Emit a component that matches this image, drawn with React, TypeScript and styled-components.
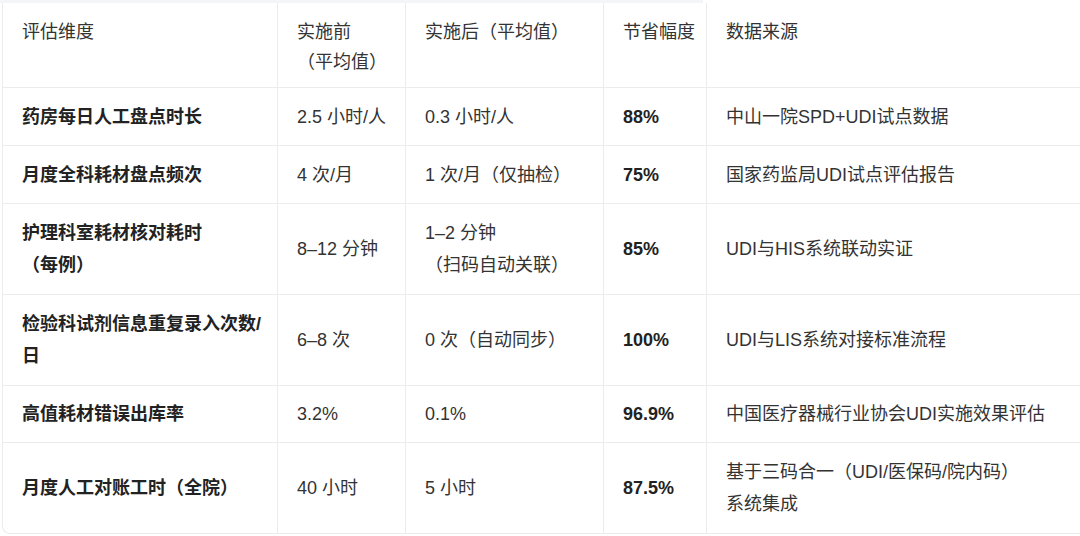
import React from "react";
import styled, { createGlobalStyle } from "styled-components";

const GlobalStyle = createGlobalStyle`
  html, body {
    margin: 0;
    padding: 0;
    background: #ffffff;
    overflow: hidden;
  }
  body {
    font-family: "Liberation Sans", "Noto Sans CJK SC", sans-serif;
  }
`;

const Page = styled.div`
  width: 1080px;
  height: 536px;
  overflow: hidden;
  background: #ffffff;
`;

const TopStrip = styled.div`
  width: 703px;
  height: 3px;
  background: #f4f5f7;
`;

const Frame = styled.div`
  margin-left: 2px;
  width: 1100px;
  border-left: 1px solid #ececec;
  border-bottom: 1px solid #ececec;
  border-bottom-left-radius: 8px;
  overflow: hidden;
`;

const Table = styled.table`
  border-collapse: separate;
  border-spacing: 0;
  table-layout: fixed;
  width: 1100px;
  font-size: 18px;
  line-height: 32px;
  color: #333333;
`;

const Row = styled.tr<{ $h: number }>`
  height: ${(p) => p.$h}px;
`;

const HeadCell = styled.th`
  font-weight: 400;
  text-align: left;
  vertical-align: top;
  padding: 14px 0 0 19px;
  line-height: 30px;
  color: #333333;
  white-space: nowrap;
  border-right: 1px solid #ececec;
  border-bottom: 1px solid #ececec;
`;

const Cell = styled.td<{ $bold?: boolean }>`
  vertical-align: middle;
  padding: 0 0 0 19px;
  white-space: nowrap;
  font-weight: ${(p) => (p.$bold ? 700 : 400)};
  color: ${(p) => (p.$bold ? "#222222" : "#333333")};
  border-right: 1px solid #ececec;
  border-bottom: 1px solid #ececec;
  ${Row}:last-child & {
    border-bottom: none;
  }
`;

const Line = styled.div``;

type RowData = {
  dim: string[];
  before: string[];
  after: string[];
  save: string;
  src: string[];
  h: number;
};

const rows: RowData[] = [
  { dim: ["药房每日人工盘点时长"], before: ["2.5 小时/人"], after: ["0.3 小时/人"], save: "88%", src: ["中山一院SPD+UDI试点数据"], h: 58 },
  { dim: ["月度全科耗材盘点频次"], before: ["4 次/月"], after: ["1 次/月（仅抽检）"], save: "75%", src: ["国家药监局UDI试点评估报告"], h: 58 },
  { dim: ["护理科室耗材核对耗时", "（每例）"], before: ["8–12 分钟"], after: ["1–2 分钟", "（扫码自动关联）"], save: "85%", src: ["UDI与HIS系统联动实证"], h: 91 },
  { dim: ["检验科试剂信息重复录入次数/", "日"], before: ["6–8 次"], after: ["0 次（自动同步）"], save: "100%", src: ["UDI与LIS系统对接标准流程"], h: 91 },
  { dim: ["高值耗材错误出库率"], before: ["3.2%"], after: ["0.1%"], save: "96.9%", src: ["中国医疗器械行业协会UDI实施效果评估"], h: 57 },
  { dim: ["月度人工对账工时（全院）"], before: ["40 小时"], after: ["5 小时"], save: "87.5%", src: ["基于三码合一（UDI/医保码/院内码）", "系统集成"], h: 90 },
];

const Lines = ({ items }: { items: string[] }) => (
  <>
    {items.map((t, i) => (
      <Line key={i}>{t}</Line>
    ))}
  </>
);

export default function App() {
  return (
    <Page>
      <GlobalStyle />
      <TopStrip />
      <Frame>
        <Table>
          <colgroup>
            <col style={{ width: 275 }} />
            <col style={{ width: 128 }} />
            <col style={{ width: 198 }} />
            <col style={{ width: 103 }} />
            <col />
          </colgroup>
          <thead>
            <Row $h={85}>
              <HeadCell>评估维度</HeadCell>
              <HeadCell>
                <Lines items={["实施前", "（平均值）"]} />
              </HeadCell>
              <HeadCell>实施后（平均值）</HeadCell>
              <HeadCell>节省幅度</HeadCell>
              <HeadCell>数据来源</HeadCell>
            </Row>
          </thead>
          <tbody>
            {rows.map((r, i) => (
              <Row key={i} $h={r.h}>
                <Cell $bold>
                  <Lines items={r.dim} />
                </Cell>
                <Cell>
                  <Lines items={r.before} />
                </Cell>
                <Cell>
                  <Lines items={r.after} />
                </Cell>
                <Cell $bold>{r.save}</Cell>
                <Cell>
                  <Lines items={r.src} />
                </Cell>
              </Row>
            ))}
          </tbody>
        </Table>
      </Frame>
    </Page>
  );
}
